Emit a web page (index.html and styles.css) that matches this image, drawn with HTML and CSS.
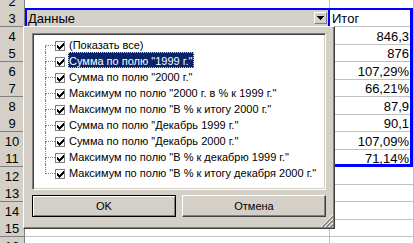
FILE: index.html
```html
<!DOCTYPE html>
<html lang="ru">
<head>
    <meta charset="UTF-8">
    <meta name="viewport" content="width=device-width, initial-scale=1.0">
    <title>Сводная таблица</title>
    <link rel="stylesheet" href="styles.css">
</head>
<body>
    <div class="page">
        <div class="sheet">
            <div class="row"><div class="rh">2</div><div class="cell"></div><div class="cell"></div></div>
            <div class="row">
                <div class="rh">3</div>
                <div class="cell field">Данные
                    <span class="drop">
                        <svg width="7" height="4" viewBox="0 0 7 4" shape-rendering="crispEdges"><path d="M0 0h7v1h-1v1h-1v1h-1v1h-1v-1h-1v-1h-1v-1h-1z" fill="#000"/></svg>
                    </span>
                </div>
                <div class="cell">Итог</div>
            </div>
            <div class="row"><div class="rh">4</div><div class="cell"></div><div class="cell num">846,3</div></div>
            <div class="row"><div class="rh">5</div><div class="cell"></div><div class="cell num">876</div></div>
            <div class="row"><div class="rh">6</div><div class="cell"></div><div class="cell num">107,29%</div></div>
            <div class="row"><div class="rh">7</div><div class="cell"></div><div class="cell num">66,21%</div></div>
            <div class="row"><div class="rh">8</div><div class="cell"></div><div class="cell num">87,9</div></div>
            <div class="row"><div class="rh">9</div><div class="cell"></div><div class="cell num">90,1</div></div>
            <div class="row"><div class="rh">10</div><div class="cell"></div><div class="cell num">107,09%</div></div>
            <div class="row"><div class="rh">11</div><div class="cell"></div><div class="cell num">71,14%</div></div>
            <div class="row"><div class="rh">12</div><div class="cell"></div><div class="cell"></div></div>
            <div class="row"><div class="rh">13</div><div class="cell"></div><div class="cell"></div></div>
            <div class="row"><div class="rh">14</div><div class="cell"></div><div class="cell"></div></div>
            <div class="row"><div class="rh">15</div><div class="cell"></div><div class="cell"></div></div>
            <div class="row"><div class="rh">16</div><div class="cell"></div><div class="cell"></div></div>
        </div>

        <!-- selection frame round the pivot table -->
        <div class="selection"></div>

        <!-- field drop-down -->
        <div class="popup">
            <div class="list">
                <div class="item"><span class="branch"><span class="branch-top"></span><span class="branch-bottom"></span></span><span class="check"><svg width="7" height="7" viewBox="0 0 7 7" shape-rendering="crispEdges"><path d="M0 2h1v3h-1zM1 3h1v3h-1zM2 4h1v3h-1zM3 3h1v3h-1zM4 2h1v3h-1zM5 1h1v3h-1zM6 0h1v3h-1z" fill="#000"/></svg></span><span class="label">(Показать все)</span></div>
                <div class="item sel"><span class="branch"><span class="branch-top"></span><span class="branch-bottom"></span></span><span class="check"><svg width="7" height="7" viewBox="0 0 7 7" shape-rendering="crispEdges"><path d="M0 2h1v3h-1zM1 3h1v3h-1zM2 4h1v3h-1zM3 3h1v3h-1zM4 2h1v3h-1zM5 1h1v3h-1zM6 0h1v3h-1z" fill="#000"/></svg></span><span class="label">Сумма по полю "1999 г."</span></div>
                <div class="item"><span class="branch"><span class="branch-top"></span><span class="branch-bottom"></span></span><span class="check"><svg width="7" height="7" viewBox="0 0 7 7" shape-rendering="crispEdges"><path d="M0 2h1v3h-1zM1 3h1v3h-1zM2 4h1v3h-1zM3 3h1v3h-1zM4 2h1v3h-1zM5 1h1v3h-1zM6 0h1v3h-1z" fill="#000"/></svg></span><span class="label">Сумма по полю "2000 г."</span></div>
                <div class="item"><span class="branch"><span class="branch-top"></span><span class="branch-bottom"></span></span><span class="check"><svg width="7" height="7" viewBox="0 0 7 7" shape-rendering="crispEdges"><path d="M0 2h1v3h-1zM1 3h1v3h-1zM2 4h1v3h-1zM3 3h1v3h-1zM4 2h1v3h-1zM5 1h1v3h-1zM6 0h1v3h-1z" fill="#000"/></svg></span><span class="label">Максимум по полю "2000 г. в % к 1999 г."</span></div>
                <div class="item"><span class="branch"><span class="branch-top"></span><span class="branch-bottom"></span></span><span class="check"><svg width="7" height="7" viewBox="0 0 7 7" shape-rendering="crispEdges"><path d="M0 2h1v3h-1zM1 3h1v3h-1zM2 4h1v3h-1zM3 3h1v3h-1zM4 2h1v3h-1zM5 1h1v3h-1zM6 0h1v3h-1z" fill="#000"/></svg></span><span class="label">Максимум по полю "В % к итогу 2000 г."</span></div>
                <div class="item"><span class="branch"><span class="branch-top"></span><span class="branch-bottom"></span></span><span class="check"><svg width="7" height="7" viewBox="0 0 7 7" shape-rendering="crispEdges"><path d="M0 2h1v3h-1zM1 3h1v3h-1zM2 4h1v3h-1zM3 3h1v3h-1zM4 2h1v3h-1zM5 1h1v3h-1zM6 0h1v3h-1z" fill="#000"/></svg></span><span class="label">Сумма по полю "Декабрь 1999 г."</span></div>
                <div class="item"><span class="branch"><span class="branch-top"></span><span class="branch-bottom"></span></span><span class="check"><svg width="7" height="7" viewBox="0 0 7 7" shape-rendering="crispEdges"><path d="M0 2h1v3h-1zM1 3h1v3h-1zM2 4h1v3h-1zM3 3h1v3h-1zM4 2h1v3h-1zM5 1h1v3h-1zM6 0h1v3h-1z" fill="#000"/></svg></span><span class="label">Сумма по полю "Декабрь 2000 г."</span></div>
                <div class="item"><span class="branch"><span class="branch-top"></span><span class="branch-bottom"></span></span><span class="check"><svg width="7" height="7" viewBox="0 0 7 7" shape-rendering="crispEdges"><path d="M0 2h1v3h-1zM1 3h1v3h-1zM2 4h1v3h-1zM3 3h1v3h-1zM4 2h1v3h-1zM5 1h1v3h-1zM6 0h1v3h-1z" fill="#000"/></svg></span><span class="label">Максимум по полю "В % к декабрю 1999 г."</span></div>
                <div class="item"><span class="branch"><span class="branch-top"></span><span class="branch-bottom"></span></span><span class="check"><svg width="7" height="7" viewBox="0 0 7 7" shape-rendering="crispEdges"><path d="M0 2h1v3h-1zM1 3h1v3h-1zM2 4h1v3h-1zM3 3h1v3h-1zM4 2h1v3h-1zM5 1h1v3h-1zM6 0h1v3h-1z" fill="#000"/></svg></span><span class="label">Максимум по полю "В % к итогу декабря 2000 г."</span></div>
            </div>
            <div class="buttons">
                <button class="btn default">OK</button>
                <button class="btn">Отмена</button>
            </div>
            <svg class="grip" width="12" height="12" viewBox="0 0 12 12">
                <path d="M12 0L0 12M12 4L4 12M12 8L8 12" stroke="#fff" stroke-width="1"/>
                <path d="M12 1.5L1.5 12M12 5.5L5.5 12M12 9.5L9.5 12" stroke="#808080" stroke-width="1.5"/>
            </svg>
        </div>
    </div>
</body>
</html>
```

FILE: styles.css
```css
* {
    margin: 0;
    padding: 0;
    box-sizing: border-box;
}
body {
    font-family: "Liberation Sans", Arial, sans-serif;
    background: #fff;
    color: #000;
}
.page {
    position: relative;
    width: 414px;
    height: 243px;
    overflow: hidden;
}
.sheet {
    margin-top: -8.5px;
}
.row {
    display: grid;
    grid-template-columns: 25px 305px 1fr;
    height: 17.5px;
    font-size: 13px;
    line-height: 15px;
}
.rh {
    background: #d4d0c8;
    border-right: 1px solid #808080;
    border-bottom: 1px solid #808080;
    text-align: center;
    padding-top: 2px;
}
.cell {
    border-right: 1px solid #c0c0c0;
    border-bottom: 1px solid #c0c0c0;
    padding: 2px 4px 0 2px;
    white-space: nowrap;
    overflow: hidden;
}
.num {
    text-align: right;
}
.field {
    background: #d4d0c8;
    border-right: 2px solid #0000ff;
    display: flex;
    justify-content: space-between;
    align-items: flex-start;
    padding: 2px 0 0 3px;
}
.drop {
    width: 13px;
    height: 12px;
    margin: 1px 1px 0 0;
    display: flex;
    align-items: center;
    justify-content: center;
    background: #d4d0c8;
    border-top: 1px solid #fff;
    border-left: 1px solid #fff;
    border-right: 1px solid #808080;
    border-bottom: 1px solid #808080;
}
.selection {
    position: absolute;
    left: 25px;
    top: 8px;
    width: 388px;
    height: 159px;
    border: solid #0000ff;
    border-width: 2px 3px 3px 2px;
}
.popup {
    position: absolute;
    left: 23px;
    top: 26px;
    width: 312px;
    height: 203px;
    background: #d4d0c8;
    border: 1px solid;
    border-color: #fff #404040 #404040 #fff;
    box-shadow: inset -1px -1px #808080;
    padding: 6px 8px 11px;
    display: flex;
    flex-direction: column;
    gap: 5px;
    font-size: 11px;
}
.list {
    height: 157px;
    background: #fff;
    border: 1px solid;
    border-color: #808080 #fff #fff #808080;
    box-shadow: inset 1px 1px #404040, inset -1px -1px #d4d0c8;
    padding: 2px 0 0 12px;
}
.item {
    display: flex;
    height: 16px;
}
.branch {
    width: 10px;
    flex: none;
    display: flex;
    flex-direction: column;
}
.branch-top {
    height: 10px;
    border-left: 1px dotted #808080;
    border-bottom: 1px dotted #808080;
}
.branch-bottom {
    flex: 1;
    border-left: 1px dotted #808080;
}
.item:first-child .branch-top,
.item:last-child .branch-bottom {
    border-left-color: transparent;
}
.check {
    width: 10px;
    height: 10px;
    margin: 5px 3px 0 0;
    flex: none;
    border: 1px solid #808080;
    background: #fff;
    display: flex;
    align-items: center;
    justify-content: center;
}
.label {
    height: 16px;
    padding: 3px 2px 0 1px;
    line-height: 13px;
    white-space: nowrap;
}
.sel .label {
    background: #0a246a;
    color: #fff;
    outline: 1px dotted #e8d27c;
    outline-offset: -1px;
}
.buttons {
    display: flex;
    gap: 6px;
}
.btn {
    flex: 1;
    height: 22px;
    font: inherit;
    color: #000;
    background: #d4d0c8;
    border: 1px solid;
    border-color: #fff #404040 #404040 #fff;
    box-shadow: inset -1px -1px #808080;
    line-height: 20px;
}
.btn.default {
    border-color: #000;
    box-shadow: inset 1px 1px #fff, inset -1px -1px #808080;
}
.grip {
    position: absolute;
    right: 1px;
    bottom: 1px;
}
```
